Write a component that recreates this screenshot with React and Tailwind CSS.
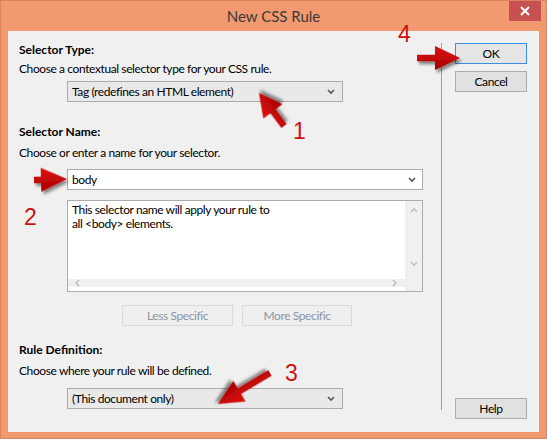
import React from "react";

const ui = { fontFamily: 'Lato, "Noto Sans", Arial, sans-serif' };

function Chevron({ dir = "down", className = "" }) {
  const paths = {
    down: "M1 2 L4 5 L7 2",
    up: "M1 5 L4 2 L7 5",
    left: "M5 1 L2 4 L5 7",
    right: "M2 1 L5 4 L2 7",
  };
  return (
    <svg width="8" height="8" viewBox="0 0 8 8" className={className}>
      <path d={paths[dir]} fill="none" stroke="currentColor" strokeWidth="1.6" />
    </svg>
  );
}

function Select({ value, width }) {
  return (
    <div
      className={`flex h-[21px] items-center justify-between border border-[#acacac] bg-[#e9e9e9] pl-[4px] pr-[7px] ${width}`}
    >
      <span className="text-[12px] leading-none text-black">{value}</span>
      <Chevron className="text-[#555]" />
    </div>
  );
}

function Btn({ children, primary, disabled, className = "" }) {
  return (
    <div
      className={`flex items-center justify-center text-[12px] ${
        disabled
          ? "border border-[#d9d9d9] bg-[#efefef] text-[#8d93a3]"
          : primary
          ? "border border-[#3c8ee0] bg-[#e5e5e5] text-black"
          : "border border-[#adadad] bg-[#e1e1e1] text-black"
      } ${className}`}
    >
      {children}
    </div>
  );
}

function arrowPoints(x1, y1, x2, y2, L, H, s) {
  const len = Math.hypot(x2 - x1, y2 - y1);
  const ang = (Math.atan2(y2 - y1, x2 - x1) * 180) / Math.PI;
  const b = len - L;
  const pts = `0,${-s} ${b},${-s} ${b},${-H} ${len},0 ${b},${H} ${b},${s} 0,${s}`;
  return { pts, transform: `translate(${x1} ${y1}) rotate(${ang})` };
}

function Arrows() {
  const list = [
    [416, 57, 459, 57, 25, 12, 3.2],
    [33, 179, 66, 178, 26, 12, 3.2],
    [283, 125, 258, 92, 23, 12, 3.2],
    [269, 372, 217, 403, 25, 12, 3.2],
  ];
  return (
    <svg className="pointer-events-none absolute left-0 top-0" width="547" height="439">
      <defs>
        <linearGradient id="red" x1="0" y1="0" x2="0" y2="1">
          <stop offset="0" stopColor="#e01010" />
          <stop offset="1" stopColor="#a50000" />
        </linearGradient>
        <filter id="sh" x="-50%" y="-50%" width="200%" height="200%">
          <feDropShadow dx="2" dy="3" stdDeviation="1.6" floodColor="#000" floodOpacity="0.45" />
        </filter>
      </defs>
      {list.map((a, i) => {
        const { pts, transform } = arrowPoints(...a);
        return <polygon key={i} points={pts} transform={transform} fill="url(#red)" filter="url(#sh)" />;
      })}
    </svg>
  );
}

function Num({ n, className }) {
  return (
    <span
      className={`absolute text-[23px] leading-none tracking-normal text-[#cc1111] ${className}`}
      style={{ fontFamily: '"Liberation Sans", Arial, sans-serif' }}
    >
      {n}
    </span>
  );
}

export default function App() {
  return (
    <div
      className="relative flex h-[439px] w-[547px] flex-col overflow-hidden border border-[#d9845c] bg-[#f2996f] tracking-[-0.4px]"
      style={ui}
    >
      <div className="relative flex h-[30px] items-center justify-center tracking-normal">
        <span className="text-[15px] text-[#3a3a3a]">New CSS Rule</span>
        <div className="absolute right-[5px] top-[-1px] flex h-[21px] w-[32px] items-center justify-center bg-[#c75050]">
          <svg width="10" height="10" viewBox="0 0 10 10">
            <path d="M1 1 L9 9 M9 1 L1 9" stroke="#fff" strokeWidth="2" />
          </svg>
        </div>
      </div>

      <div className="mx-[7px] flex h-[401px] bg-[#f0f0f0] text-[12px] text-black">
        <div className="flex w-[433px] flex-col pl-[11px] pt-[11px] leading-[16px]">
          <div className="font-bold tracking-normal">Selector Type:</div>
          <div className="mt-[3px]">Choose a contextual selector type for your CSS rule.</div>
          <div className="ml-[48px] mt-[4px]">
            <Select value="Tag (redefines an HTML element)" width="w-[276px]" />
          </div>

          <div className="mt-[22px] font-bold tracking-normal">Selector Name:</div>
          <div className="mt-[5px]">Choose or enter a name for your selector.</div>
          <div className="ml-[48px] mt-[8px] flex h-[21px] w-[356px] items-center justify-between border border-[#acacac] bg-white pl-[4px] pr-[6px]">
            <span>body</span>
            <Chevron className="text-[#555]" />
          </div>

          <div className="ml-[48px] mt-[10px] flex h-[92px] w-[356px] flex-col border border-[#acacac] bg-white">
            <div className="flex flex-1">
              <div className="flex-1 pl-[4px] pt-[2px] leading-[14px]">
                This selector name will apply your rule to
                <br />
                all &lt;body&gt; elements.
              </div>
              <div className="flex w-[17px] flex-col items-center justify-between bg-[#f0f0f0] py-[6px] text-[#c2c2c2]">
                <Chevron dir="up" />
                <Chevron dir="down" />
              </div>
            </div>
            <div className="flex h-[17px] items-center">
              <div className="flex flex-1 items-center justify-between bg-[#f0f0f0] px-[6px] text-[#c2c2c2]">
                <Chevron dir="left" />
                <Chevron dir="right" />
              </div>
              <div className="h-[17px] w-[17px] bg-[#f0f0f0]" />
            </div>
          </div>

          <div className="ml-[103px] mt-[13px] flex gap-[9px]">
            <Btn disabled className="h-[21px] w-[111px]">Less Specific</Btn>
            <Btn disabled className="h-[21px] w-[110px]">More Specific</Btn>
          </div>

          <div className="mt-[16px] font-bold tracking-normal">Rule Definition:</div>
          <div className="mt-[5px]">Choose where your rule will be defined.</div>
          <div className="ml-[48px] mt-[9px]">
            <Select value="(This document only)" width="w-[276px]" />
          </div>
        </div>

        <div className="flex flex-1">
          <div className="mt-[12px] h-[367px] w-px bg-[#a0a0a0]" />
          <div className="ml-[13px] mt-[12px] flex h-[376px] flex-col">
            <Btn primary className="h-[21px] w-[72px]">OK</Btn>
            <Btn className="mt-[7px] h-[21px] w-[72px]">Cancel</Btn>
            <div className="flex-1" />
            <Btn className="h-[21px] w-[72px]">Help</Btn>
          </div>
        </div>
      </div>

      <Arrows />
      <Num n="1" className="left-[292px] top-[119px]" />
      <Num n="2" className="left-[23px] top-[205px]" />
      <Num n="3" className="left-[284px] top-[361px]" />
      <Num n="4" className="left-[397px] top-[22px]" />
    </div>
  );
}
